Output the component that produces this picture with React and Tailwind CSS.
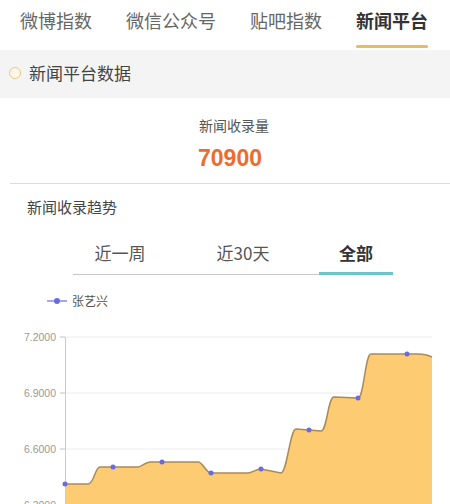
import React from "react";

const cjk = { fontFamily: '"Noto Sans CJK SC", "Noto Sans", sans-serif' };

function Chart() {
  const labels = [
    { y: 337, t: "7.2000" },
    { y: 393, t: "6.9000" },
    { y: 449, t: "6.6000" },
    { y: 505, t: "6.3000" },
  ];
  const line =
    "M65 484 L88 484 C94 484 95 467 100 467 L138 467 C142 467 145 462 150 462 L198 462 C203 462 206 473 211 473 L248 473 C252 473 256 469 261 469 L281 473 C287 473 290 429 296 429 L309 430 L321 431 C327 431 328 397 334 397 L358 398 C364 398 365 354 371 354 L418 354 C424 354 428 355 432 357";
  const dots = [
    [65, 484],
    [113, 467],
    [162, 462],
    [211, 473],
    [261, 469],
    [309, 430],
    [358, 398],
    [407, 354],
  ];
  return (
    <svg
      className="block w-[450px] h-[200px]"
      viewBox="0 309 450 200"
      width="450"
      height="200"
    >
      {labels.map((l) => (
        <g key={l.t}>
          <line x1="60" x2="432" y1={l.y} y2={l.y} stroke="#ececec" strokeWidth="1" />
          <line x1="60" x2="65" y1={l.y} y2={l.y} stroke="#ccc" strokeWidth="1" />
          <text
            x="56"
            y={l.y + 3.5}
            textAnchor="end"
            fontSize="10.5"
            fill="#999"
            fontFamily="Liberation Sans, Arial, sans-serif"
          >
            {l.t}
          </text>
        </g>
      ))}
      <path d={line + " L432 520 L65 520 Z"} fill="#fccb72" />
      <line x1="65.5" x2="65.5" y1="337" y2="520" stroke="#ccc" strokeWidth="1" />
      <path d={line} fill="none" stroke="#a98a5a" strokeWidth="1.5" />
      {dots.map(([x, y]) => (
        <circle key={x} cx={x} cy={y} r="2.5" fill="#6b6be0" />
      ))}
    </svg>
  );
}

export default function App() {
  const tabs = ["微博指数", "微信公众号", "贴吧指数", "新闻平台"];
  return (
    <div className="w-[450px] h-[504px] overflow-hidden bg-white" style={cjk}>
      {/* top tabs */}
      <div className="h-[50px] flex pl-[20px] gap-[34px]">
        {tabs.map((t, i) => {
          const active = i === 3;
          return (
            <div key={t} className="flex flex-col h-[50px]">
              <div
                className={
                  "mt-[8px] leading-[24px] text-[18px] whitespace-nowrap " +
                  (active ? "font-bold text-[#333]" : "text-[#666]")
                }
              >
                {t}
              </div>
              {active && <div className="mt-auto mb-[2px] h-[3px] bg-[#ebb95e] rounded-full" />}
            </div>
          );
        })}
      </div>

      {/* section header */}
      <div className="h-[48px] bg-[#f4f4f4] flex items-center pl-[9px] pb-[3px]">
        <div className="w-[12px] h-[12px] rounded-full border-[1.5px] border-[#f2c57a] bg-[#fdf6ea]" />
        <div className="ml-[8px] text-[17px] leading-[24px] text-[#444]">新闻平台数据</div>
      </div>

      {/* stats */}
      <div className="pt-[17px] flex flex-col items-center pl-[18px]">
        <div className="text-[14px] leading-[20px] text-[#555]">新闻收录量</div>
        <div
          className="mt-[10px] mr-[8px] text-[23px] leading-[26px] font-bold text-[#f06a2c]"
          style={{ fontFamily: '"Liberation Sans", Arial, sans-serif' }}
        >
          70900
        </div>
      </div>
      <div className="mt-[12px] ml-[10px] h-px bg-[#dcdcdc]" />

      <div className="mt-[12px] pl-[27px] text-[15px] leading-[22px] text-[#444]">新闻收录趋势</div>

      {/* sub tabs */}
      <div className="mt-[23px] ml-[73px] flex">
        <div className="w-[94px] text-center text-[17px] leading-[24px] text-[#555] pb-[8px] border-b border-[#c8c8c8]">
          近一周
        </div>
        <div className="w-[152px] text-center text-[17px] leading-[24px] text-[#555] pb-[8px] border-b border-[#c8c8c8]">
          近30天
        </div>
        <div className="w-[74px] text-center text-[17px] leading-[24px] font-bold text-[#333] pb-[7px] border-b-[3px] border-[#6cc5c9]">
          全部
        </div>
      </div>

      {/* legend */}
      <div className="mt-[18px] pl-[47px] flex items-center h-[16px]">
        <svg width="20" height="10" viewBox="0 0 20 10">
          <line x1="0" x2="20" y1="5" y2="5" stroke="#8a8ae6" strokeWidth="1.5" />
          <circle cx="10" cy="5" r="3" fill="#6b6be0" />
        </svg>
        <div className="ml-[5px] text-[12px] leading-[16px] text-[#555]">张艺兴</div>
      </div>

      <Chart />
    </div>
  );
}
